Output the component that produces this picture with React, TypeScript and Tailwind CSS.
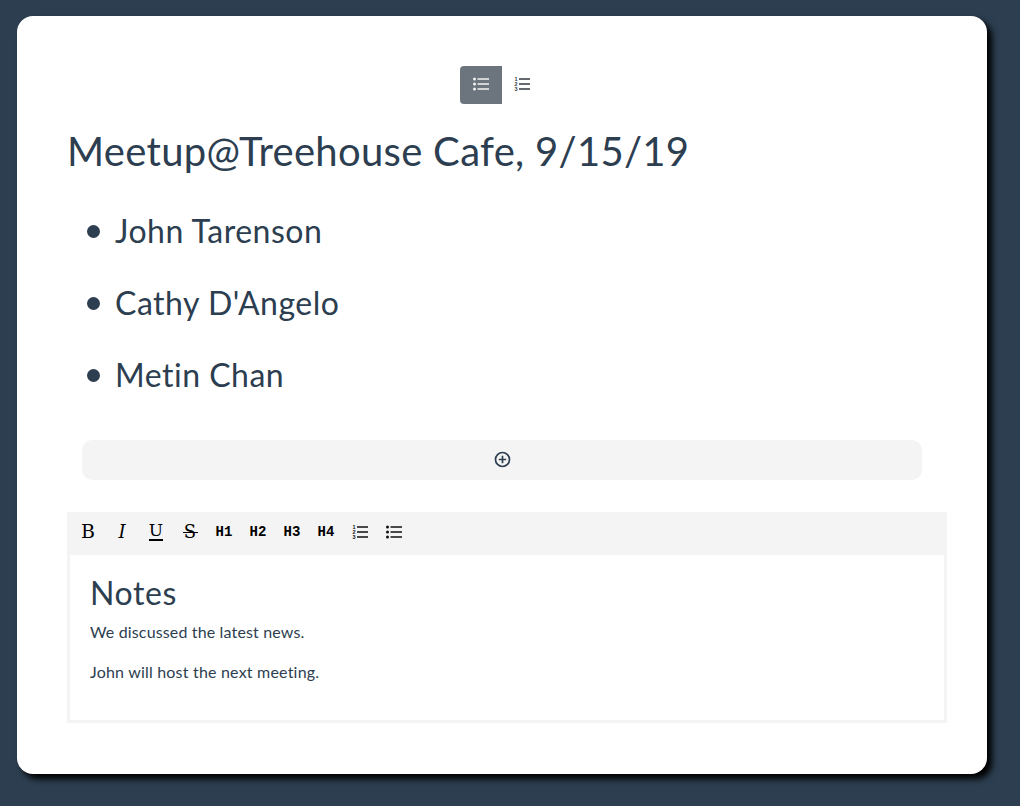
const people = ["John Tarenson", "Cathy D'Angelo", "Metin Chan"];
const headings = ["H1", "H2", "H3", "H4"];

function BulletIcon({ color }: { color: string }) {
    return (
        <svg width={16} height={16} viewBox="0 0 16 16" fill="none">
            <circle cx="1.5" cy="3" r="1.5" fill={color} />
            <circle cx="1.5" cy="8" r="1.5" fill={color} />
            <circle cx="1.5" cy="13" r="1.5" fill={color} />
            <path d="M4.5 3H16M4.5 8H16M4.5 13H16" stroke={color} strokeWidth="1.5" />
        </svg>
    );
}

function NumberedIcon({ color }: { color: string }) {
    return (
        <svg width={16} height={16} viewBox="0 0 16 16" fill="none">
            <g fill={color} fontSize="5.5" fontWeight="700" fontFamily="Liberation Sans, sans-serif">
                <text x="0.5" y="5">1</text>
                <text x="0.5" y="10">2</text>
                <text x="0.5" y="15">3</text>
            </g>
            <path d="M5 3h11M5 8h11M5 13h11" stroke={color} strokeWidth="1.5" />
        </svg>
    );
}

function Toolbar() {
    return (
        <div className="flex h-[43px] w-[880px] items-center bg-[#f4f4f4] pb-[4px] pl-[4px] font-['Liberation_Mono',monospace] text-black">
            <span className="w-[34px] text-center font-['DejaVu_Serif',serif] text-[19px] leading-none">B</span>
            <span className="w-[34px] text-center font-['DejaVu_Serif',serif] text-[18px] italic leading-none">I</span>
            <span className="flex w-[34px] justify-center">
                <span className="border-b-[2px] border-black font-['DejaVu_Serif',serif] text-[17px] leading-[17px]">U</span>
            </span>
            <span className="relative w-[34px] text-center font-['DejaVu_Serif',serif] text-[18px] leading-none">
                S
                <span className="absolute left-[10px] top-[9px] h-[1px] w-[15px] bg-black" />
            </span>
            {headings.map((h) => (
                <span key={h} className="w-[34px] text-center text-[14px] font-bold leading-none">
                    {h}
                </span>
            ))}
            <span className="flex w-[34px] justify-center"><NumberedIcon color="#111" /></span>
            <span className="flex w-[34px] justify-center"><BulletIcon color="#111" /></span>
        </div>
    );
}

export default function App() {
    return (
        <div className="h-[806px] overflow-hidden bg-[#2c3e50] pl-[17px] pt-[16px] font-['Lato',sans-serif] text-[#2c3e50]">
            <div className="h-[758px] w-[970px] rounded-[16px] bg-white px-[50px] pt-[50px] shadow-[5px_5px_6px_#000]">
                <div className="flex justify-center">
                    <button className="flex h-[38px] w-[42px] items-center justify-center rounded-l-[4px] bg-[#6c757d] pb-[2px]">
                        <BulletIcon color="#f2f2f2" />
                    </button>
                    <button className="flex h-[38px] w-[42px] items-center justify-center pb-[2px] pr-[2px]">
                        <NumberedIcon color="#343a40" />
                    </button>
                </div>
                <h1 className="mt-[19px] text-[40px] leading-[56px] tracking-[0.3px]">Meetup@Treehouse Cafe, 9/15/19</h1>
                <ul className="mt-[16px]">
                    {people.map((p) => (
                        <li key={p} className="flex h-[72px] items-center text-[32px] tracking-[0.5px]">
                            <span className="ml-[20px] mr-[15px] size-[13px] rounded-full bg-[#2c3e50]" />
                            {p}
                        </li>
                    ))}
                </ul>
                <div className="mx-[15px] mt-[29px] flex h-[40px] items-center justify-center rounded-[10px] bg-[#f4f4f4] pb-[2px]">
                    <svg width="17" height="17" viewBox="0 0 17 17" fill="none" stroke="#2c3e50" strokeWidth="1.7">
                        <circle cx="8.5" cy="8.5" r="7" />
                        <path d="M8.5 4.8v7.4M4.8 8.5h7.4" />
                    </svg>
                </div>
                <div className="mt-[32px] w-[880px]">
                    <Toolbar />
                    <div className="h-[168px] border-[3px] border-t-0 border-[#f4f4f4] pl-[20px] pt-[18px]">
                        <h2 className="mb-[7px] text-[32px] leading-[40px] tracking-[0.6px]">Notes</h2>
                        <p className="text-[16px] leading-[24px] tracking-[0.15px]">We discussed the latest news.</p>
                        <p className="mt-[16px] text-[16px] leading-[24px] tracking-[0.2px]">John will host the next meeting.</p>
                    </div>
                </div>
            </div>
        </div>
    );
}
